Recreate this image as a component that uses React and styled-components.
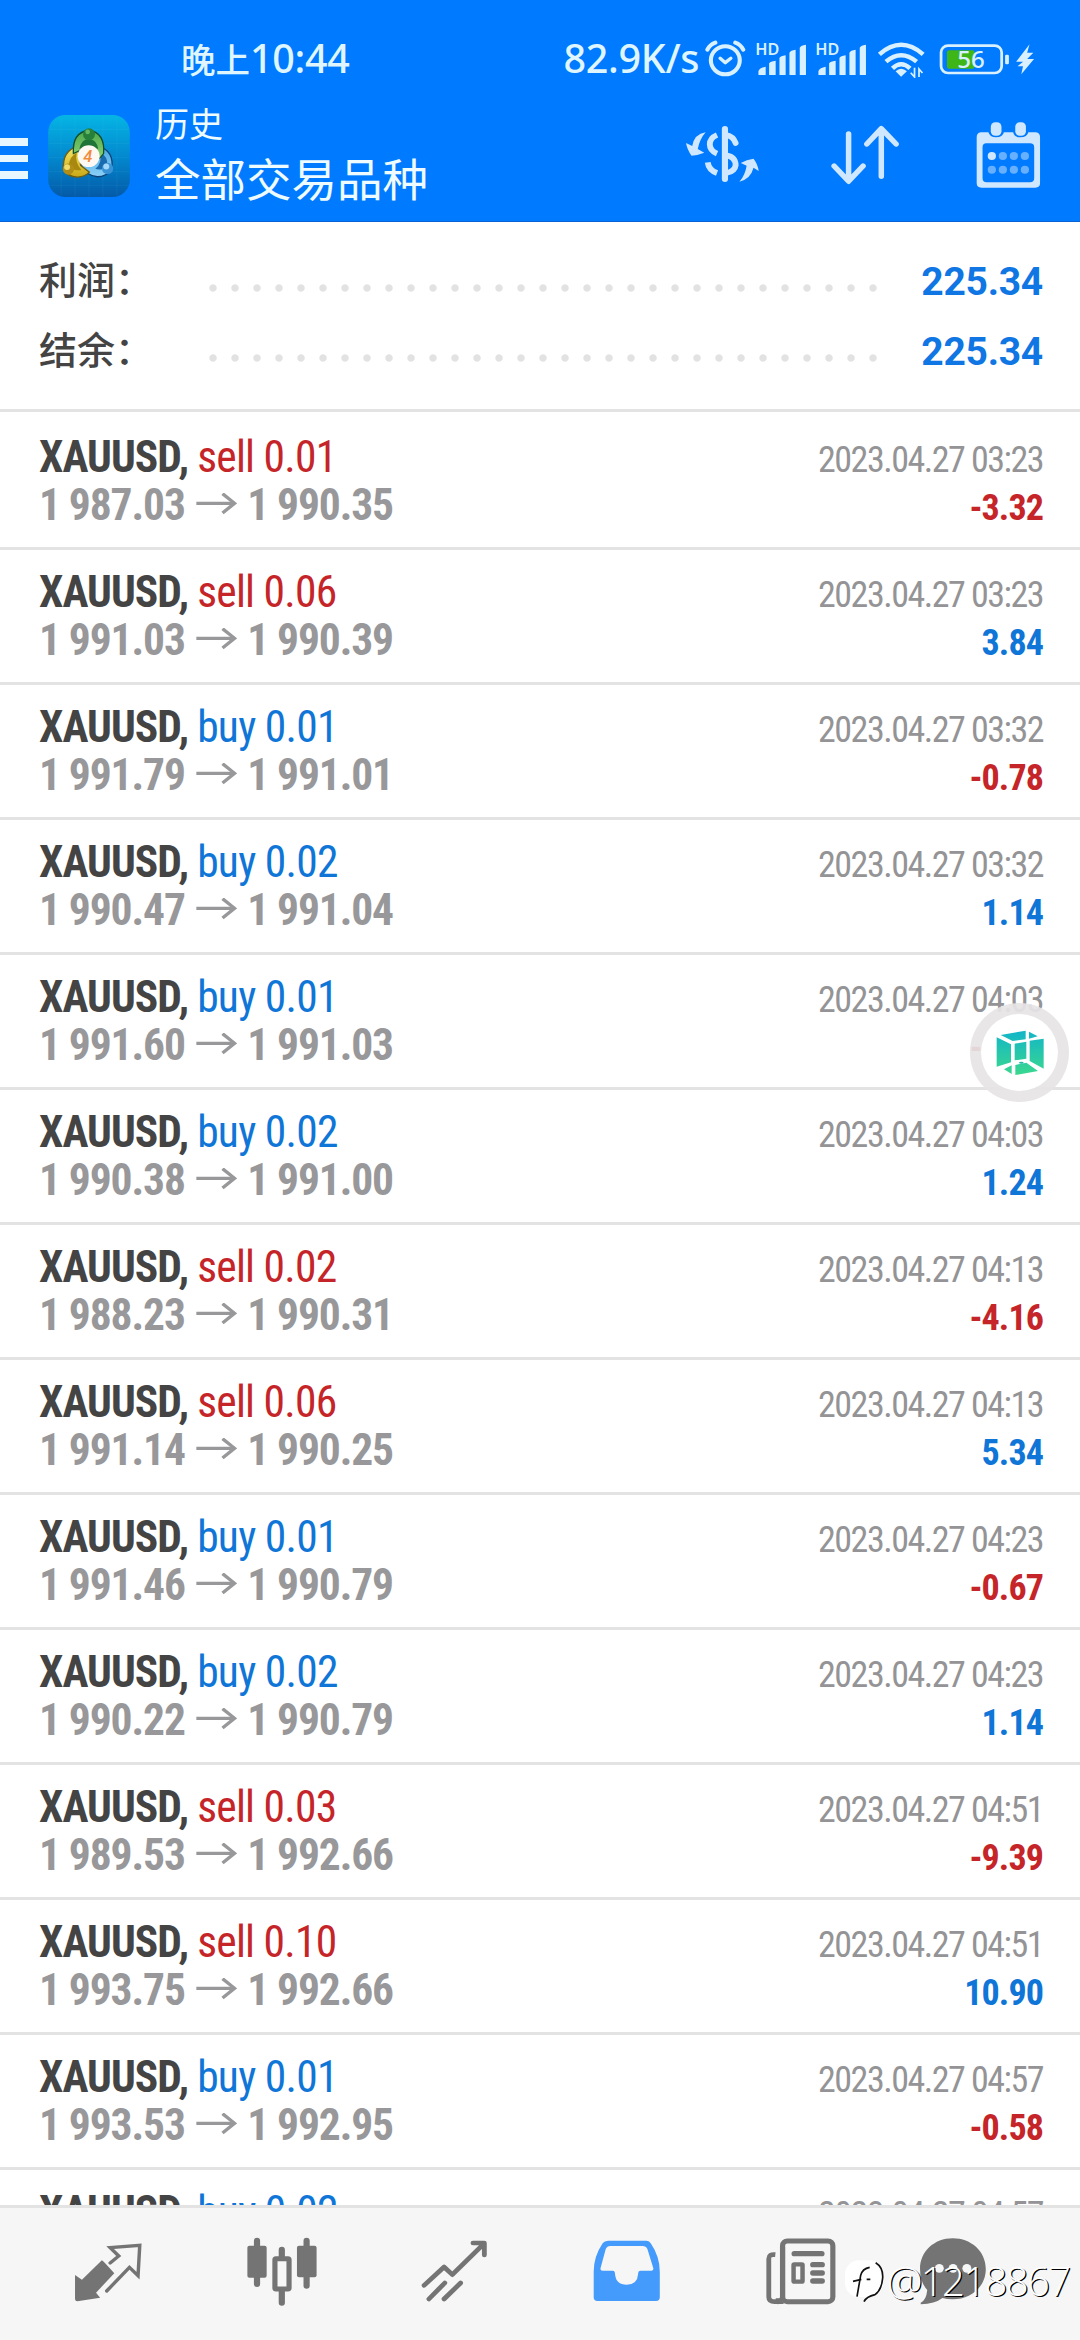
import React from "react";
import styled, { createGlobalStyle } from "styled-components";

const Global = createGlobalStyle`
  * { box-sizing: border-box; }
  body { margin: 0; background: #fff; }
`;

const cond = `font-family: "Roboto Condensed", Roboto, "Noto Sans CJK SC", sans-serif; font-stretch: 75%;`;

const Screen = styled.div`
  position: relative;
  width: 1080px;
  height: 2340px;
  overflow: hidden;
  display: flex;
  flex-direction: column;
  background: #fff;
  font-family: Roboto, "Noto Sans CJK SC", sans-serif;
`;

const Header = styled.header`
  height: 222px;
  flex: none;
  background: #007aff;
  border-bottom: 1px solid #0a63d6;
`;

const StatusBar = styled.div`
  height: 100px;
  padding: 36px 45px 0 181px;
  display: flex;
  align-items: flex-start;
  justify-content: space-between;
  color: #dff6ff;
`;

const statusText = `
  margin-top: -1px;
  font: 500 39.5px/46px "Noto Sans", "Noto Sans CJK SC", sans-serif;
  letter-spacing: -0.3px;
  white-space: nowrap;
`;

const Clock = styled.div`
  ${statusText}
  display: flex;
  align-items: baseline;
  span { font-size: 34.5px; letter-spacing: 0; }
`;

const StatusIcons = styled.div`
  display: flex;
  align-items: flex-start;
`;

const Speed = styled.span`
  ${statusText}
  width: 142px;
`;

const Slot = styled.span`
  display: block;
  flex: none;
  margin-left: ${(p) => p.$left || 0}px;
  margin-top: ${(p) => p.$top || 0}px;
  svg { display: block; }
`;

const Toolbar = styled.div`
  display: flex;
  align-items: flex-start;
  height: 121px;
`;

const Burger = styled.div`
  width: 28px;
  margin-top: 38px;
  display: flex;
  flex-direction: column;
  gap: 9px;
`;

const Bar = styled.span`
  height: 7.5px;
  background: #e6f7ff;
`;

const Titles = styled.div`
  margin-left: 25px;
  width: 531px;
  color: #eefbff;
  font-family: "Noto Sans CJK SC", sans-serif;
`;

const Screenname = styled.div`
  font-size: 34px;
  line-height: 46px;
`;

const Subtitle = styled.div`
  font-size: 45.5px;
  line-height: 62px;
`;

const Summary = styled.section`
  height: 190px;
  flex: none;
  padding: 23px 37px 0 39px;
  border-bottom: 3px solid #e3e3e3;
`;

const SummaryRow = styled.div`
  height: 70px;
  display: flex;
  align-items: center;
`;

const Label = styled.span`
  width: 163px;
  margin-top: -4px;
  color: #444;
  font: 500 38px/70px "Noto Sans CJK SC", sans-serif;
  white-space: nowrap;
`;

const Dots = styled.span`
  width: 682px;
  height: 8px;
  margin-top: 16px;
  background: radial-gradient(circle at 11px 4px, #e2e2e2 3.2px, transparent 4.2px) 0 0 / 22px 8px repeat-x;
`;

const Total = styled.span`
  flex: 1;
  margin-top: 3px;
  text-align: right;
  color: #0f76e3;
  font-weight: 700;
  font-size: 39px;
  line-height: 70px;
  letter-spacing: -0.25px;
`;

const List = styled.main`
  flex: 1;
  min-height: 0;
  overflow: hidden;
  padding-top: 3px;
`;

const Row = styled.div`
  height: 135px;
  padding: 19px 37px 0 39px;
  border-bottom: 3px solid #e3e3e3;
  ${cond}
`;

const Line = styled.div`
  height: 48px;
  line-height: 48px;
  display: flex;
  justify-content: space-between;
  align-items: baseline;
  white-space: nowrap;
`;

const Symbol = styled.span`
  font-size: 43.5px;
  font-weight: 700;
  letter-spacing: -0.95px;
  color: #444;
`;

const Side = styled.span`
  font-size: 43.5px;
  font-weight: 400;
  letter-spacing: -0.75px;
  color: ${(p) => (p.$sell ? "#c52528" : "#0f76d8")};
`;

const Prices = styled.span`
  display: flex;
  align-items: baseline;
  font-size: 43.5px;
  font-weight: 700;
  letter-spacing: -1.1px;
  color: #98989b;
  svg { margin: 0 10.5px 0 11px; }
`;

const Time = styled.span`
  font-size: 36px;
  letter-spacing: -1.5px;
  color: #949496;
`;

const Profit = styled.span`
  font-size: 36px;
  font-weight: 700;
  letter-spacing: -0.9px;
  color: ${(p) => (p.$loss ? "#c52528" : "#0f76d8")};
`;

const Nav = styled.nav`
  height: 135px;
  flex: none;
  border-top: 3px solid #e3e3e3;
  background: #f6f6f6;
  padding-left: 22px;
  display: flex;
`;

const NavItem = styled.div`
  width: ${(p) => p.$w || 173}px;
  height: 132px;
  display: flex;
  justify-content: center;
  padding-top: ${(p) => p.$top}px;
`;

const Floating = styled.div`
  position: absolute;
  left: 970px;
  top: 1003px;
  width: 99px;
  height: 99px;
  border-radius: 50%;
  background: rgba(230, 228, 229, 0.93);
  display: flex;
  align-items: center;
  justify-content: center;
`;

const FloatingCore = styled.div`
  width: 77px;
  height: 77px;
  border-radius: 50%;
  background: #fff;
  display: flex;
  align-items: center;
  justify-content: center;
`;

const Watermark = styled.div`
  position: absolute;
  left: 844px;
  top: 2255px;
  display: flex;
  align-items: center;
  gap: 1px;
  color: #fff;
  font: 300 40px/52px "Open Sans", "Noto Sans", sans-serif;
  letter-spacing: -1.6px;
  text-shadow: 1.2px 1.2px 0 #000;
  white-space: nowrap;
`;

/* Artwork is drawn on a grid of 2.904 x 3 units per pixel. */
const Art = ({ box: [x, y, w, h], children, ...rest }) => (
  <svg width={w / 2.904} height={h / 3} viewBox={`${x} ${y} ${w} ${h}`} preserveAspectRatio="none" fill="none" {...rest}>
    {children}
  </svg>
);

const ICE = "#d9f1ff";
const PALE = "#cfe8ff";
const GREY = "#747474";

const AlarmIcon = () => (
  <Art box={[480, 120, 118, 112]} stroke={ICE} strokeLinecap="round" strokeLinejoin="round">
    <circle cx="539" cy="181" r="42" strokeWidth="12" />
    <path d="M524 175L539 188L555 175" strokeWidth="10" />
    <path d="M487 149Q494 134 510 128M591 149Q584 134 568 128" strokeWidth="12" />
  </Art>
);

const HdText = styled.text`
  font: 600 46px "Noto Sans", sans-serif;
`;

const SignalIcon = () => (
  <Art box={[624, 126, 152, 100]} fill={ICE}>
    <HdText x="625" y="166" textLength="70" lengthAdjust="spacingAndGlyphs">HD</HdText>
    <path d="M634 225V213Q638 203 655 200V225ZM665 225V190Q668 184 684 182V225ZM695 225V174Q698 168 713 166V225ZM724 225V158Q727 151 742 149V225ZM754 225V143Q757 136 772 134V225Z" />
  </Art>
);

const WifiIcon = () => (
  <Art box={[980, 126, 142, 108]} stroke={ICE} strokeWidth="13">
    <path d="M987 163Q1050 106 1114 163M1006 185Q1050 146 1095 185M1025 205Q1050 181 1076 205" />
    <path d="M1034 214Q1050 199 1067 214L1050 230Z" fill={ICE} stroke="none" />
    <path d="M1089 203V231L1078 218M1102 231V207L1112 219" strokeWidth="5" />
  </Art>
);

const BatteryText = styled.text`
  font: 500 70px "Noto Sans", sans-serif;
`;

const BatteryIcon = () => (
  <Art box={[1158, 128, 280, 98]}>
    <rect x="1181" y="150" width="80" height="55" rx="6" fill="#3fb618" />
    <rect x="1164" y="136" width="176" height="82" rx="20" stroke={ICE} strokeWidth="8" />
    <rect x="1350" y="163" width="11" height="29" rx="4" fill={ICE} />
    <BatteryText x="1211" y="204" textLength="80" lengthAdjust="spacingAndGlyphs" fill={ICE}>56</BatteryText>
    <path d="M1421 132L1382 184H1402L1386 198H1402L1397 222L1434 176H1414L1432 157H1414Z" fill={ICE} />
  </Art>
);

const CurrencyIcon = () => (
  <Art box={[420, 376, 218, 174]} stroke={PALE}>
    <path d="M536 388V538" strokeWidth="18" strokeLinecap="round" />
    <path d="M513 406Q492 415 492 434Q492 453 513 462M486 488Q489 511 513 520" strokeWidth="17" />
    <path d="M540 406Q560 410 567 430M540 467Q567 472 567 497Q565 515 540 520" strokeWidth="17" strokeLinecap="round" />
    <path d="M480 398Q447 403 441 439L423 430Q426 450 439 468Q457 467 476 459L457 448Q463 418 480 398ZM578 546Q611 537 619 504L634 514Q631 492 619 477Q599 480 582 490L599 498Q595 526 578 546Z" fill={PALE} stroke="none" />
  </Art>
);

const SortIcon = () => (
  <Art box={[842, 376, 204, 182]} stroke={PALE} strokeWidth="16" strokeLinecap="round" strokeLinejoin="round">
    <path d="M896 403V544M854 499L896 545L938 499M991 530V388M949 433L991 387L1034 433" />
  </Art>
);

const CalendarIcon = () => (
  <Art box={[1266, 362, 190, 204]}>
    <path fillRule="evenodd" fill={PALE} d="M1280 396H1302Q1306 411 1324 411Q1344 411 1347 396H1374Q1377 411 1395 411Q1415 411 1418 396H1440Q1452 398 1452 410V549Q1452 562 1438 562H1282Q1268 562 1268 549V410Q1268 398 1280 396ZM1296 429Q1285 429 1285 441V533Q1285 546 1297 546H1423Q1435 546 1435 533V441Q1435 429 1423 429Z" />
    <rect x="1309" y="366" width="31" height="40" rx="13" fill={PALE} />
    <rect x="1380" y="366" width="31" height="40" rx="13" fill={PALE} />
    {[0, 1, 2, 3, 4, 5, 6, 7].map((i) => (
      <circle key={i} cx={1312 + (i % 4) * 32} cy={i < 4 ? 467 : 508} r="12" fill={i ? "#66b0ff" : PALE} />
    ))}
  </Art>
);

const LogoDigit = styled.text`
  font: italic 500 50px Roboto, sans-serif;
`;

const AppLogo = () => (
  <svg width="82" height="82" viewBox="142 44 246 247" fill="none">
    <defs>
      <linearGradient id="tile" x1="0" y1="0" x2="0" y2="1">
        <stop offset="0" stopColor="#05b5e4" />
        <stop offset=".5" stopColor="#0389cf" />
        <stop offset="1" stopColor="#045aa8" />
      </linearGradient>
      <linearGradient id="leaf" x1="0" y1="0" x2="0" y2="1">
        <stop offset="0" stopColor="#4aa84c" />
        <stop offset="1" stopColor="#8fd277" />
      </linearGradient>
      <linearGradient id="gold" x1="0" y1="0" x2="0" y2="1">
        <stop offset="0" stopColor="#f7e96c" />
        <stop offset="1" stopColor="#c9a815" />
      </linearGradient>
      <linearGradient id="sky" x1="0" y1="0" x2="0" y2="1">
        <stop offset="0" stopColor="#4aa9e2" />
        <stop offset="1" stopColor="#8bd0f8" />
      </linearGradient>
    </defs>
    <rect x="142" y="44" width="246" height="247" rx="52" fill="url(#tile)" />
    <path d="M181 50V286M223 46V290M265 46V290M307 46V290M349 50V286M146 88H384M144 130H386M144 172H386M144 214H386M146 256H384" stroke="#5fd0ee" strokeOpacity=".14" strokeWidth="2" />
    <path d="M297 140Q340 152 334 206Q318 230 290 230Q256 226 242 196Z" fill="url(#sky)" stroke="#0e4478" strokeWidth="4" />
    <path d="M298 158Q322 168 320 196Q304 214 284 206Q306 190 298 158Z" fill="#1a6aae" />
    <path d="M232 138Q184 152 188 208Q202 232 232 231Q252 230 266 216L240 196Z" fill="url(#gold)" stroke="#6f5f10" strokeWidth="4" />
    <path d="M228 158Q203 172 205 198Q222 214 242 210Q222 188 228 158Z" fill="#a8880f" />
    <path d="M218 160Q214 96 265 90Q314 98 309 160Q300 174 290 178L240 150Z" fill="url(#leaf)" stroke="#12502c" strokeWidth="4" />
    <path d="M236 146Q242 116 265 116Q288 118 293 146Z" fill="#1f7438" />
    <circle cx="265" cy="102" r="18" fill="#27803a" />
    <circle cx="261" cy="95" r="7" fill="#65b665" />
    <circle cx="203" cy="207" r="17" fill="#b08e18" />
    <circle cx="199" cy="201" r="9" fill="#f0dc6c" />
    <circle cx="321" cy="205" r="17" fill="#3a92d6" />
    <circle cx="317" cy="199" r="9" fill="#a2d8fa" />
    <circle cx="264" cy="168" r="33" fill="#fdf8f2" />
    <LogoDigit x="248" y="186" fill="#f18b3c">4</LogoDigit>
  </svg>
);

const ArrowIcon = () => (
  <Art box={[568, 798, 119, 82]} stroke="#98989b" strokeWidth="10">
    <path d="M569 829H680" />
    <path d="M645 800L680 829L645 858" />
  </Art>
);

const QuotesIcon = () => (
  <Art box={[216, 308, 198, 178]} stroke={GREY}>
    <path d="M219 404L239 418L297 360Q303 364 333 399L280 457L292 472L226 483Q219 483 219 476Z" fill={GREY} stroke="none" />
    <path d="M321 368L346 347L321 322L407 315L402 406L377 381L311 452" strokeWidth="10" strokeLinecap="round" />
  </Art>
);

const CandlesIcon = () => (
  <Art box={[712, 292, 208, 208]} stroke={GREY} strokeLinecap="round">
    <path d="M744 303V433M888 303V438M816 330V355M816 452V489" strokeWidth="18" />
    <rect x="716" y="318" width="56" height="96" rx="6" fill={GREY} stroke="none" />
    <rect x="860" y="318" width="57" height="95" rx="6" fill={GREY} stroke="none" />
    <rect x="796" y="357" width="41" height="91" rx="3" fill="#f6f6f6" strokeWidth="15" />
  </Art>
);

const TradeIcon = () => (
  <Art box={[1222, 300, 194, 188]} stroke={GREY} strokeWidth="14" strokeLinecap="round" strokeLinejoin="round">
    <path d="M1231 436L1289 381L1313 404L1405 311M1373 309H1406V345M1245 477L1291 429M1289 477L1337 429" />
  </Art>
);

const HistoryIcon = () => (
  <Art box={[156, 300, 198, 186]}>
    <path fillRule="evenodd" fill="#459bfc" d="M200 302H310Q320 302 325 312Q350 350 350 395V472Q350 483 339 483H169Q158 483 158 472V395Q158 350 184 310Q189 302 200 302ZM206 318Q197 318 193 327L178 384Q176 392 184 392H213Q220 392 220 402Q222 434 254 434Q285 434 287 402Q287 392 294 392H325Q333 392 331 384L314 327Q310 318 300 318Z" />
  </Art>
);

const NewsIcon = () => (
  <Art box={[654, 290, 208, 206]} stroke={GREY}>
    <rect x="705" y="302" width="146" height="182" rx="14" strokeWidth="15" />
    <path d="M684 343Q665 341 665 355V470Q665 484 682 484H708Q692 484 692 474" strokeWidth="14" />
    <path d="M705 320V470Q705 484 690 484" strokeWidth="15" />
    <path d="M739 340H819M793 373H820M793 398H820M793 422H820" strokeWidth="16" strokeLinecap="round" />
    <rect x="737" y="372" width="26" height="52" rx="2" strokeWidth="13" />
  </Art>
);

const ChatIcon = () => (
  <Art box={[1100, 290, 198, 206]}>
    <path fill={GREY} d="M1198 294C1252 294 1294 334 1294 386C1294 438 1252 477 1198 477Q1180 477 1168 473Q1146 491 1105 492V487Q1121 480 1124 449Q1103 426 1103 386C1103 334 1144 294 1198 294Z" />
    <circle cx="1159" cy="384" r="13" fill="#f6f6f6" />
    <circle cx="1199" cy="384" r="13" fill="#f6f6f6" />
    <circle cx="1239" cy="384" r="13" fill="#f6f6f6" />
  </Art>
);

const CubeIcon = () => (
  <svg width="48" height="46" viewBox="650 238 144 138" fill="none">
    <defs>
      <linearGradient id="cube" gradientUnits="userSpaceOnUse" x1="0" y1="240" x2="0" y2="374">
        <stop offset="0" stopColor="#12b5c8" />
        <stop offset="1" stopColor="#3bd88e" />
      </linearGradient>
    </defs>
    <path fill="url(#cube)" d="M664 253L739 240V266L700 271ZM749 243L775 257L749 264ZM652 260L695 281V335L652 348ZM706 279L741 273V324L706 329ZM751 270L793 264V354L751 331ZM674 356L697 344V370ZM708 343L741 336L776 361L708 373Z" />
    <ellipse cx="726" cy="336" rx="7" ry="3" fill="#23b9a6" />
  </svg>
);

const WatermarkLogo = () => (
  <svg width="42" height="44" viewBox="27 93 126 132" fill="none">
    <rect x="30" y="97" width="114" height="110" rx="42" fill="#fff" />
    <path d="M66 206L77 142Q82 122 104 118M54 160L79 154M95 154H106M122 104Q145 118 143 150Q140 186 120 200Q94 206 87 221" stroke="#111" strokeWidth="5" />
  </svg>
);

const deals = [
  ["sell", "0.01", "1 987.03", "1 990.35", "03:23", "-3.32"],
  ["sell", "0.06", "1 991.03", "1 990.39", "03:23", "3.84"],
  ["buy", "0.01", "1 991.79", "1 991.01", "03:32", "-0.78"],
  ["buy", "0.02", "1 990.47", "1 991.04", "03:32", "1.14"],
  ["buy", "0.01", "1 991.60", "1 991.03", "04:03", "-0.57"],
  ["buy", "0.02", "1 990.38", "1 991.00", "04:03", "1.24"],
  ["sell", "0.02", "1 988.23", "1 990.31", "04:13", "-4.16"],
  ["sell", "0.06", "1 991.14", "1 990.25", "04:13", "5.34"],
  ["buy", "0.01", "1 991.46", "1 990.79", "04:23", "-0.67"],
  ["buy", "0.02", "1 990.22", "1 990.79", "04:23", "1.14"],
  ["sell", "0.03", "1 989.53", "1 992.66", "04:51", "-9.39"],
  ["sell", "0.10", "1 993.75", "1 992.66", "04:51", "10.90"],
  ["buy", "0.01", "1 993.53", "1 992.95", "04:57", "-0.58"],
  ["buy", "0.02", "", "", "04:57", ""],
];

const Deal = ({ deal: [side, lots, open, close, time, profit] }) => (
  <Row>
    <Line>
      <span>
        <Symbol>XAUUSD, </Symbol>
        <Side $sell={side === "sell"}>{side} {lots}</Side>
      </span>
      <Time>2023.04.27 {time}</Time>
    </Line>
    {open && (
      <Line>
        <Prices>{open}<ArrowIcon />{close}</Prices>
        <Profit $loss={profit.startsWith("-")}>{profit}</Profit>
      </Line>
    )}
  </Row>
);

export default function App() {
  return (
    <Screen>
      <Global />
      <Header>
        <StatusBar>
          <Clock><span>晚上</span>10:44</Clock>
          <StatusIcons>
            <Speed>82.9K/s</Speed>
            <Slot $top={4}><AlarmIcon /></Slot>
            <Slot $top={6} $left={9}><SignalIcon /></Slot>
            <Slot $top={6} $left={8}><SignalIcon /></Slot>
            <Slot $top={6} $left={9}><WifiIcon /></Slot>
            <Slot $top={7} $left={13}><BatteryIcon /></Slot>
          </StatusIcons>
        </StatusBar>
        <Toolbar>
          <Burger><Bar /><Bar /><Bar /></Burger>
          <Slot $top={15} $left={20}><AppLogo /></Slot>
          <Titles>
            <Screenname>历史</Screenname>
            <Subtitle>全部交易品种</Subtitle>
          </Titles>
          <Slot $top={25} $left={-1}><CurrencyIcon /></Slot>
          <Slot $top={25} $left={70}><SortIcon /></Slot>
          <Slot $top={21} $left={76}><CalendarIcon /></Slot>
        </Toolbar>
      </Header>
      <Summary>
        <SummaryRow><Label>利润：</Label><Dots /><Total>225.34</Total></SummaryRow>
        <SummaryRow><Label>结余：</Label><Dots /><Total>225.34</Total></SummaryRow>
      </Summary>
      <List>
        {deals.map((d, i) => <Deal key={i} deal={d} />)}
      </List>
      <Nav>
        <NavItem $top={35}><QuotesIcon /></NavItem>
        <NavItem $top={29}><CandlesIcon /></NavItem>
        <NavItem $top={32}><TradeIcon /></NavItem>
        <NavItem $top={32}><HistoryIcon /></NavItem>
        <NavItem $top={29}><NewsIcon /></NavItem>
        <NavItem $top={29} $w={132}><ChatIcon /></NavItem>
      </Nav>
      <Floating><FloatingCore><CubeIcon /></FloatingCore></Floating>
      <Watermark><WatermarkLogo />@1218867</Watermark>
    </Screen>
  );
}
